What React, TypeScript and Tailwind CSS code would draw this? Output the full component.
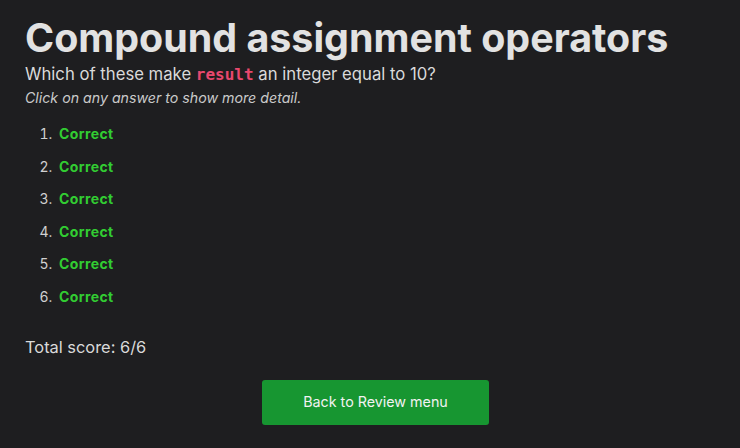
import React from "react";

const answers = [1, 2, 3, 4, 5, 6];

export default function App() {
  return (
    <div className="min-h-[448px] w-full bg-[#1e1e20] pt-[14px] pl-[25px] pr-[14px] font-['Inter',sans-serif]">
      <h1 className="text-[39.4px] leading-[48px] font-bold text-[#e2e2e2]">Compound assignment operators</h1>
      <p className="text-[16.7px] leading-[24px] text-[#dadada]">
        Which of these make{" "}
        <code className="font-['DejaVu_Sans_Mono',monospace] font-bold text-[16px] text-[#e8486e]">result</code>{" "}
        an integer equal to 10?
      </p>
      <p className="mt-[1px] text-[14.2px] leading-[20px] italic text-[#cacaca]">
        Click on any answer to show more detail.
      </p>

      <ol className="mt-[16px] list-decimal pl-[31px] flex flex-col gap-[12.5px] text-[14px] leading-[20px] text-[#d0d0d0]">
        {answers.map((n) => (
          <li key={n} className="pl-[3px]">
            <span className="font-bold tracking-[0.4px] text-[#32cd32] cursor-pointer">Correct</span>
          </li>
        ))}
      </ol>

      <p className="mt-[28px] text-[16.4px] leading-[24px] text-[#dadada]">Total score: 6/6</p>

      <div className="mt-[21px] flex justify-center">
        <button className="w-[227px] h-[45px] rounded-[3px] bg-[#179631] text-[14.3px] text-[#f2f2f2]">
          Back to Review menu
        </button>
      </div>
    </div>
  );
}
